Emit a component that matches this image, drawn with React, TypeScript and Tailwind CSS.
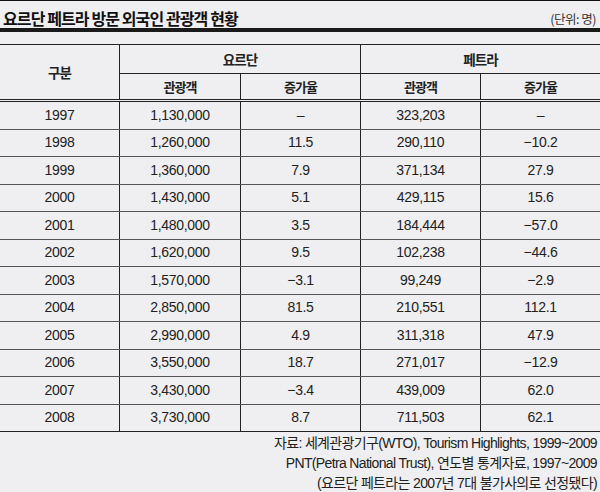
const rows: [string, string, string, string, string][] = [
  ["1997", "1,130,000", "–", "323,203", "–"],
  ["1998", "1,260,000", "11.5", "290,110", "−10.2"],
  ["1999", "1,360,000", "7.9", "371,134", "27.9"],
  ["2000", "1,430,000", "5.1", "429,115", "15.6"],
  ["2001", "1,480,000", "3.5", "184,444", "−57.0"],
  ["2002", "1,620,000", "9.5", "102,238", "−44.6"],
  ["2003", "1,570,000", "−3.1", "99,249", "−2.9"],
  ["2004", "2,850,000", "81.5", "210,551", "112.1"],
  ["2005", "2,990,000", "4.9", "311,318", "47.9"],
  ["2006", "3,550,000", "18.7", "271,017", "−12.9"],
  ["2007", "3,430,000", "−3.4", "439,009", "62.0"],
  ["2008", "3,730,000", "8.7", "711,503", "62.1"],
];

const kr = "font-['Noto_Sans_CJK_KR',sans-serif]";
const num = "font-['Liberation_Sans','Noto_Sans_CJK_KR',sans-serif]";

export default function App() {
  return (
    <div className="w-[600px] h-[492px] bg-[#efeff1] text-[#222] overflow-hidden">
      <div className="h-px bg-[#111]" />
      <div className="h-[27px] flex items-end justify-between px-[3px] pb-[2px]">
        <h1 className={`${kr} text-[16px] font-bold tracking-[-0.9px] leading-none text-[#111]`}>
          요르단 페트라 방문 외국인 관광객 현황
        </h1>
        <span className={`${kr} text-[12.5px] tracking-[-0.5px] leading-none pb-px pr-[1px] text-[#333]`}>
          (단위: 명)
        </span>
      </div>
      <div className="h-[4px] bg-[#1a1a1a]" />

      <div className="mt-[12px] border-t border-[#222]">
        {/* header */}
        <div className="grid grid-cols-[119px_121px_120px_120px_120px] border-b-[3px] border-double border-[#222]">
          <div className={`${kr} row-span-2 flex items-center justify-center text-[13.5px] font-bold tracking-[-1px]`}>
            구분
          </div>
          <div className={`${kr} col-span-2 h-[29px] flex items-center justify-center border-l border-b border-[#222] text-[13.5px] font-bold tracking-[-1px]`}>
            요르단
          </div>
          <div className={`${kr} col-span-2 h-[29px] flex items-center justify-center border-l border-b border-[#222] text-[13.5px] font-bold tracking-[-1px]`}>
            페트라
          </div>
          {["관광객", "증가율", "관광객", "증가율"].map((t, i) => (
            <div
              key={i}
              className={`${kr} h-[25px] flex items-center justify-center border-l border-[#222] text-[13px] font-bold tracking-[-1px]`}
            >
              {t}
            </div>
          ))}
        </div>

        {/* body */}
        {rows.map((r, i) => (
          <div
            key={r[0]}
            className={`grid grid-cols-[119px_121px_120px_120px_120px] h-[27.5px] border-b ${
              i === rows.length - 1 ? "border-[#222]" : "border-[#555]"
            }`}
          >
            {r.map((c, j) => (
              <div
                key={j}
                className={`${num} flex items-center justify-center text-[14px] tracking-[-0.3px] ${
                  j > 0 ? "border-l border-[#222]" : ""
                }`}
              >
                {c}
              </div>
            ))}
          </div>
        ))}
      </div>

      <div className={`${num} text-right pr-[3px] pt-[1px] text-[14px] leading-[20px] tracking-[-0.65px] text-[#222]`}>
        <p>자료: 세계관광기구(WTO), Tourism Highlights, 1999~2009</p>
        <p>PNT(Petra National Trust), 연도별 통계자료, 1997~2009</p>
        <p>(요르단 페트라는 2007년 7대 불가사의로 선정됐다)</p>
      </div>
    </div>
  );
}
